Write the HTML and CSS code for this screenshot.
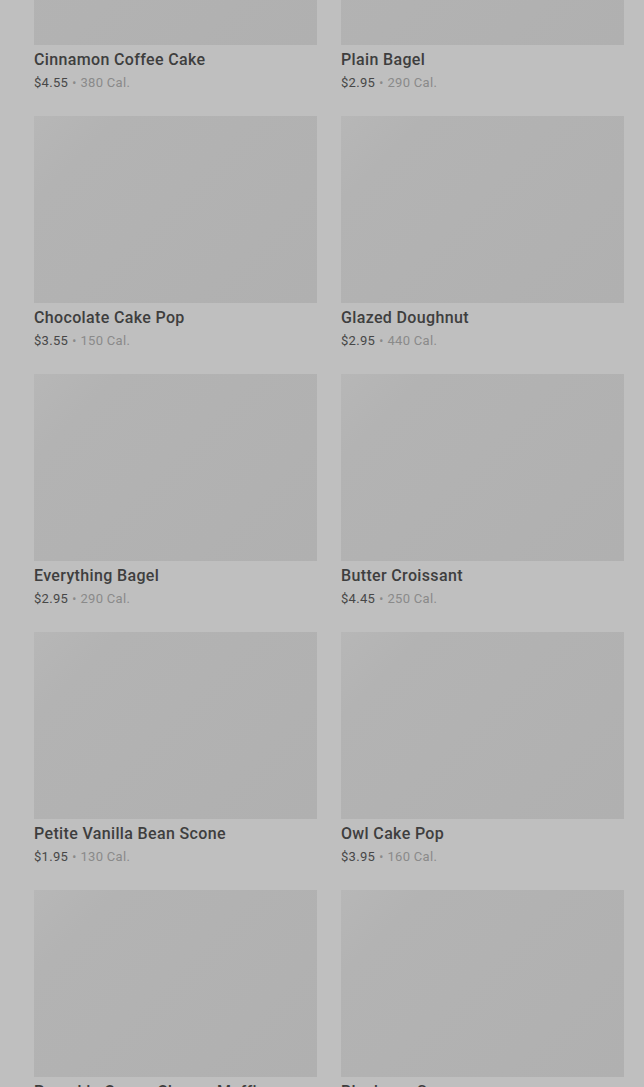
FILE: index.html
```html
<!DOCTYPE html>
<html>
<head>
<meta charset="utf-8">
<link rel="stylesheet" href="styles.css">
</head>
<body>
<div class="grid">
  <div class="card"><div class="img"></div><div class="title">Cinnamon Coffee Cake</div><div class="meta"><span class="price">$4.55</span><span class="sep">•</span><span class="cal">380 Cal.</span></div></div>
  <div class="card"><div class="img"></div><div class="title">Plain Bagel</div><div class="meta"><span class="price">$2.95</span><span class="sep">•</span><span class="cal">290 Cal.</span></div></div>
  <div class="card"><div class="img"></div><div class="title">Chocolate Cake Pop</div><div class="meta"><span class="price">$3.55</span><span class="sep">•</span><span class="cal">150 Cal.</span></div></div>
  <div class="card"><div class="img"></div><div class="title">Glazed Doughnut</div><div class="meta"><span class="price">$2.95</span><span class="sep">•</span><span class="cal">440 Cal.</span></div></div>
  <div class="card"><div class="img"></div><div class="title">Everything Bagel</div><div class="meta"><span class="price">$2.95</span><span class="sep">•</span><span class="cal">290 Cal.</span></div></div>
  <div class="card"><div class="img"></div><div class="title">Butter Croissant</div><div class="meta"><span class="price">$4.45</span><span class="sep">•</span><span class="cal">250 Cal.</span></div></div>
  <div class="card"><div class="img"></div><div class="title">Petite Vanilla Bean Scone</div><div class="meta"><span class="price">$1.95</span><span class="sep">•</span><span class="cal">130 Cal.</span></div></div>
  <div class="card"><div class="img"></div><div class="title">Owl Cake Pop</div><div class="meta"><span class="price">$3.95</span><span class="sep">•</span><span class="cal">160 Cal.</span></div></div>
  <div class="card"><div class="img"></div><div class="title">Pumpkin Cream Cheese Muffin</div><div class="meta"><span class="price">$3.45</span><span class="sep">•</span><span class="cal">350 Cal.</span></div></div>
  <div class="card"><div class="img"></div><div class="title">Blueberry Scone</div><div class="meta"><span class="price">$3.45</span><span class="sep">•</span><span class="cal">380 Cal.</span></div></div>
</div>
</body>
</html>
```
FILE: styles.css
```css
html, body {
  margin: 0;
  padding: 0;
  background: #bfbfbf;
  overflow: hidden;
  height: 1087px;
}
body {
  font-family: Roboto, "Liberation Sans", sans-serif;
}
.grid {
  display: grid;
  grid-template-columns: 283px 283px;
  column-gap: 24px;
  row-gap: 23px;
  padding-left: 34px;
  margin-top: -142px;
}
.card {
  display: flex;
  flex-direction: column;
}
.img {
  height: 187px;
  background: linear-gradient(135deg, #b7b7b7 0%, #b3b3b3 18%, #b0b0b0 100%);
}
.title {
  margin-top: 4px;
  line-height: 22px;
  font-size: 16px;
  font-weight: 500;
  color: #3e3e3e;
  letter-spacing: 0.35px;
  white-space: nowrap;
}
.meta {
  margin-top: 2px;
  line-height: 20px;
  font-size: 13px;
  letter-spacing: 0.3px;
  display: flex;
  align-items: center;
}
.price {
  color: #474747;
}
.sep {
  color: #8a8a8a;
  font-size: 12px;
  margin: 0 4px;
}
.cal {
  color: #8a8a8a;
}
```
